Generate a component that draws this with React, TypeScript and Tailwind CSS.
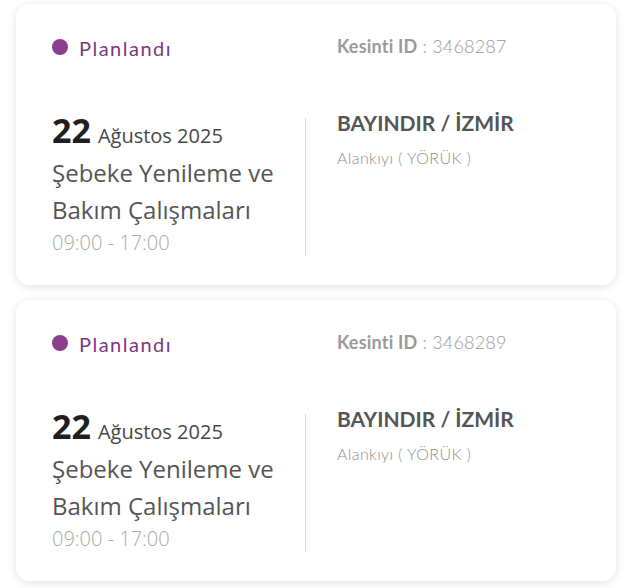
import React from "react";

type Outage = { id: string };

const data: Outage[] = [{ id: "3468287" }, { id: "3468289" }];

const ubuntu = { fontFamily: '"Open Sans", "Noto Sans", sans-serif' };

function Card({ id }: Outage) {
  return (
    <div className="h-[281px] rounded-[14px] bg-white pl-9 pt-[30px] shadow-[0_2px_10px_rgba(0,0,0,0.12)]">
      <div className="flex h-6 items-center font-['Lato',sans-serif]">
        <div className="flex w-[285px] items-center gap-[11px]">
          <span className="mt-[1px] h-4 w-4 rounded-full bg-[#8a3f8d]" />
          <span className="mt-[3px] text-[20px] tracking-[1.5px] text-[#7b3a80]">Planlandı</span>
        </div>
        <div className="text-[18px] tracking-[0.2px] text-[#9a9a9a]">
          <span className="font-bold">Kesinti ID</span>
          <span className="font-light"> : {id}</span>
        </div>
      </div>
      <div className="mt-[60px] flex">
        <div className="h-[138px] w-[254px] border-r border-[#d9d9d9]" style={ubuntu}>
          <div className="-mt-[6px] flex items-baseline leading-[36px]">
            <span className="text-[34px] font-bold text-[#1f1f1f]">22</span>
            <span className="ml-[7px] text-[20px] text-[#474747]">Ağustos 2025</span>
          </div>
          <div className="text-[24px] leading-[37px] text-[#555]">
            Şebeke Yenileme ve
            <br />
            Bakım Çalışmaları
          </div>
          <div className="mt-[2px] text-[20px] font-light leading-[26px] text-[#aaa]">09:00 - 17:00</div>
        </div>
        <div className="pl-[31px] font-['Lato',sans-serif]">
          <div className="-mt-[8px] text-[21px] font-bold leading-[26px] text-[#555]">
            BAYINDIR / İZMİR
          </div>
          <div className="mt-[11px] text-[16px] font-light tracking-[0.4px] leading-[22px] text-[#8f8f8f]">
            Alankıyı ( YÖRÜK )
          </div>
        </div>
      </div>
    </div>
  );
}

export default function App() {
  return (
    <div className="flex min-h-screen flex-col gap-[15px] bg-white px-4 pt-1">
      {data.map((d) => (
        <Card key={d.id} {...d} />
      ))}
    </div>
  );
}
